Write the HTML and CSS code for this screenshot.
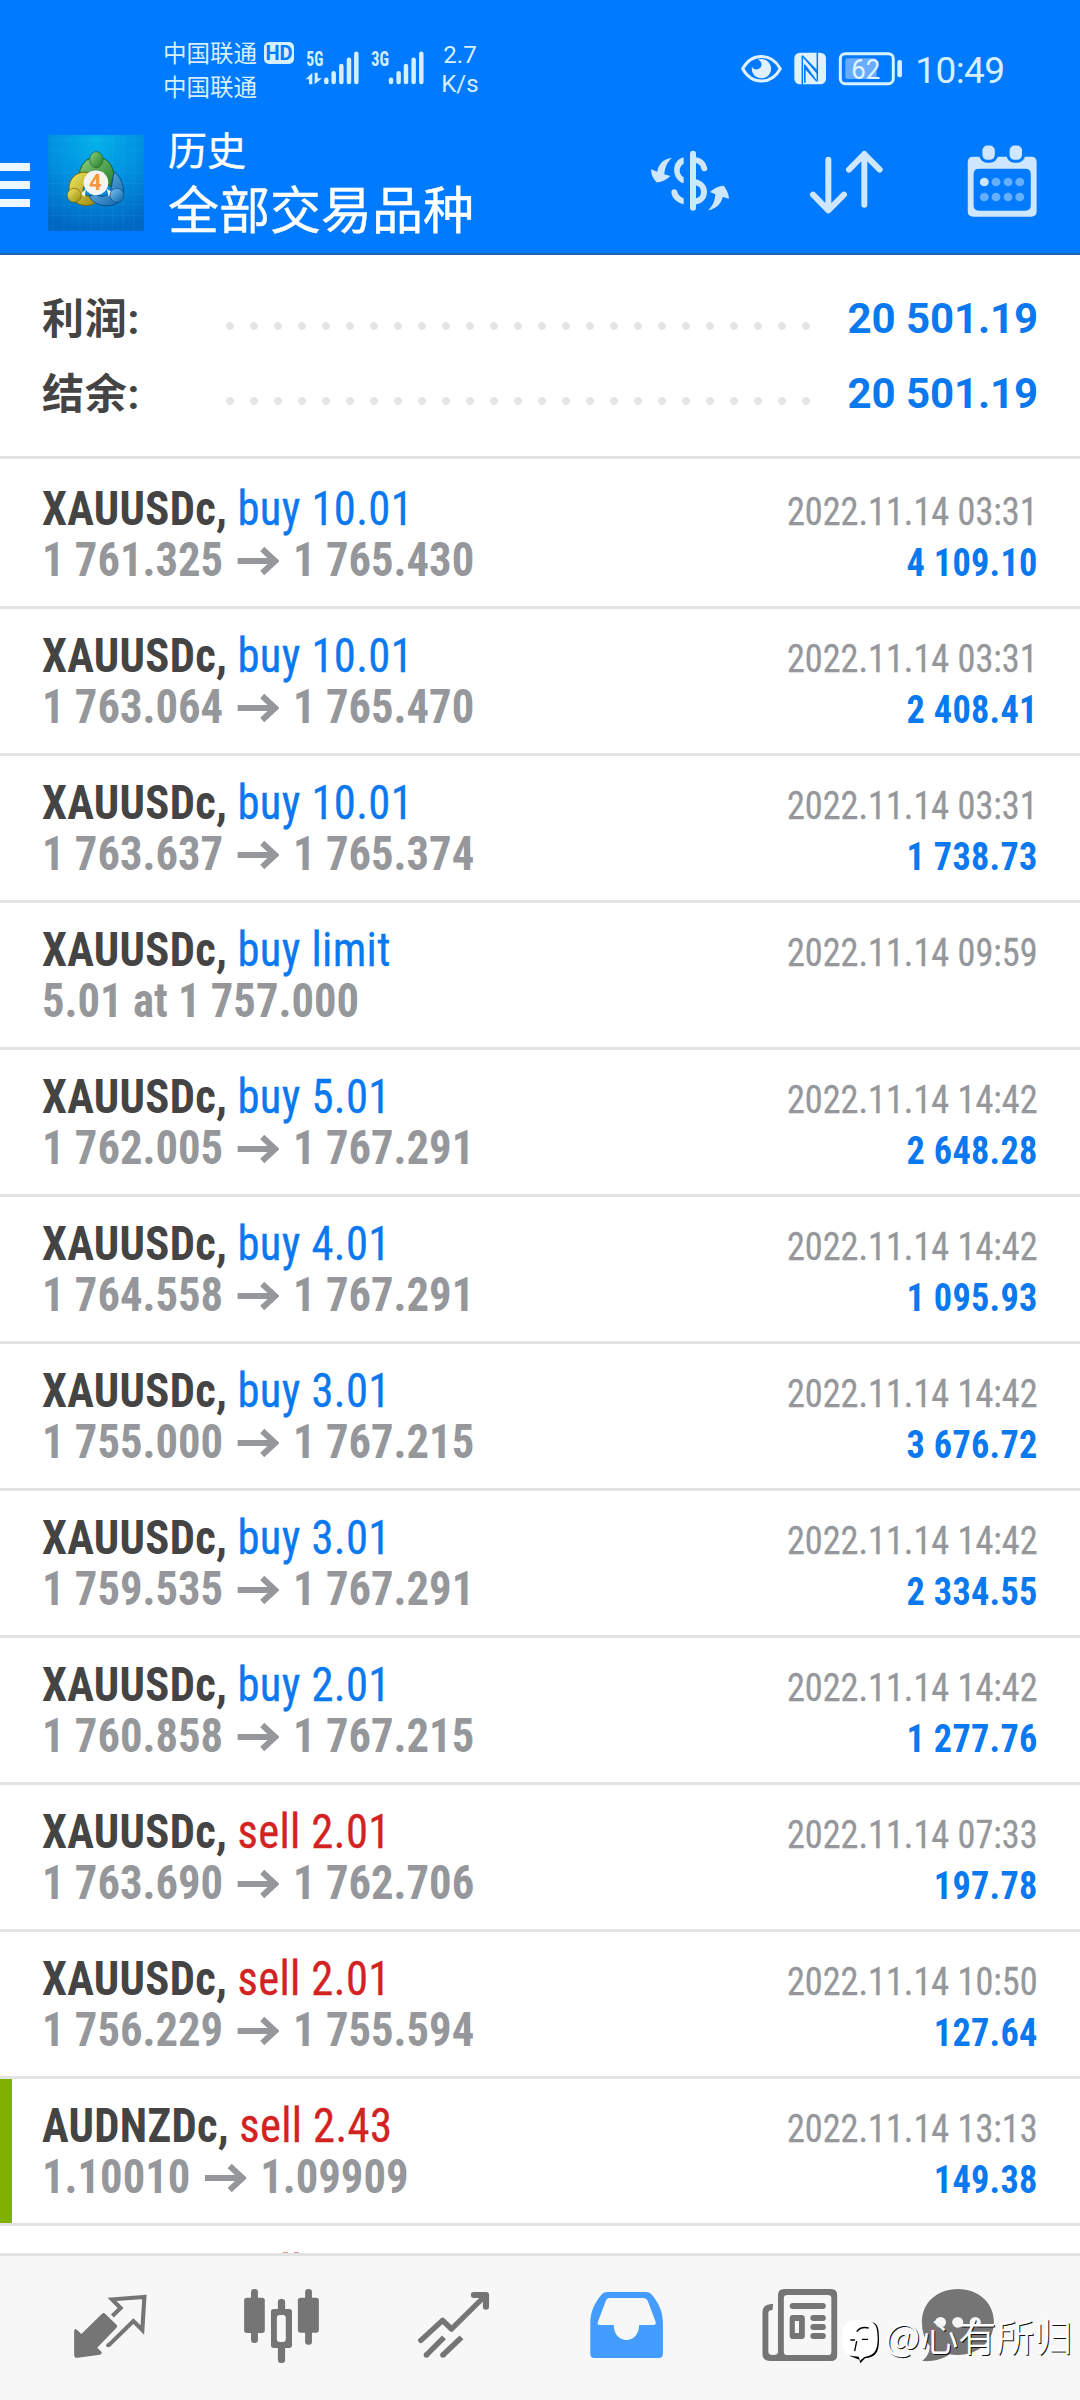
FILE: index.html
```html
<!DOCTYPE html>
<html lang="zh-CN">
<head>
<meta charset="utf-8">
<title>历史</title>
<link rel="stylesheet" href="styles.css">
</head>
<body>
<svg class="defs" width="0" height="0">
  <symbol id="arrow" viewBox="0 0 42 30" preserveAspectRatio="none"><path d="M0 15H38M25 3L38 15L25 27" fill="none" stroke="currentColor" stroke-width="6"/></symbol>
</svg>
<div class="screen">
  <header class="header">
    <div class="status">
      <div class="carriers"><div>中国联通</div><div>中国联通</div></div>
      <span class="hd">HD</span>
      <svg class="signal" viewBox="40 50 370 120" fill="#d6efff">
        <g class="net"><text x="50" y="108" textLength="51" lengthAdjust="spacingAndGlyphs">5G</text><text x="245" y="108" textLength="53" lengthAdjust="spacingAndGlyphs">3G</text></g>
        <path d="M68 127L48 147H58V162H68zM75 162V127H84V144H97z"/>
        <g stroke="#d6efff" stroke-width="13.5" stroke-linecap="round"><path d="M110 148V155M132 129V155M155 107V155M178 88V155M200 70V155M304 148V155M327 129V155M349 107V155M372 88V155M395 70V155"/></g>
      </svg>
      <div class="speed"><div>2.7</div><div>K/s</div></div>
      <svg class="indicators" viewBox="30 30 490 110">
        <path d="M38 86C65 37 124 37 151 86C124 135 65 135 38 86Z" fill="none" stroke="#dff1ff" stroke-width="9" stroke-linejoin="round"/>
        <path d="M84 59A29 29 0 1 1 66 80A15 15 0 1 0 84 59Z" fill="#dff1ff"/>
        <rect x="193" y="38" width="95" height="95" rx="17" fill="#dff1ff"/>
        <path d="M217 48V133M262 38V122" stroke="#007aff" stroke-width="4.500"/>
        <path d="M217 44L262 91V103L217 50ZM222 73L227 75L264 126L257 123L227 89V128H222Z" fill="#007aff"/>
        <rect x="331" y="41" width="159" height="90" rx="15" fill="none" stroke="#d6f3ff" stroke-width="9"/>
        <rect x="346" y="55" width="94" height="62" rx="7" fill="#69acff"/>
        <rect x="502" y="60" width="14" height="52" rx="6" fill="#d6f3ff"/>
        <text x="364" y="116" font-size="81" textLength="87" lengthAdjust="spacingAndGlyphs" fill="#e0f5ff">62</text>
      </svg>
      <span class="clock">10:49</span>
    </div>
    <div class="toolbar">
      <div class="menu"><i></i><i></i><i></i></div>
      <svg class="logo" viewBox="24 45 288 288">
        <defs>
          <radialGradient id="sky" cx=".5" cy=".05" r=".95"><stop offset="0" stop-color="#04b2e9"/><stop offset=".5" stop-color="#0090e0"/><stop offset="1" stop-color="#0068c2"/></radialGradient>
          <linearGradient id="gr" x1="0" y1="0" x2="1" y2="1"><stop offset="0" stop-color="#8fd07b"/><stop offset="1" stop-color="#1f7c2b"/></linearGradient>
          <linearGradient id="ye" x1="0" y1="0" x2="1" y2="1"><stop offset="0" stop-color="#f3ea62"/><stop offset="1" stop-color="#98870c"/></linearGradient>
          <linearGradient id="bl" x1="0" y1="0" x2="1" y2="1"><stop offset="0" stop-color="#7cc8f3"/><stop offset="1" stop-color="#0a5ea8"/></linearGradient>
        </defs>
        <rect x="24" y="45" width="288" height="288" fill="url(#sky)"/>
        <path d="M39 45V333M72 45V333M120 45V333M153 45V333M186 45V333M218 45V333M250 45V333M282 45V333M24 60H312M24 93H312M24 126H312M24 158H312M24 190H312M24 222H312M24 254H312M24 286H312" stroke="#5cc6f5" stroke-opacity=".18" stroke-width="2"/>
        <path d="M118 176C112 92 222 88 222 172L210 200L196 180C192 142 148 142 146 172Z" fill="url(#gr)" stroke="#17602b" stroke-width="3"/>
        <path d="M150 159C104 146 78 188 90 222C98 254 140 266 168 248L158 226C132 238 116 206 142 188Z" fill="url(#ye)" stroke="#71630e" stroke-width="3"/>
        <path d="M222 156C250 174 262 226 238 246C208 268 158 256 148 228L168 222C184 236 212 228 214 202Z" fill="url(#bl)" stroke="#0d4f8c" stroke-width="3"/>
        <path d="M138 206L122 222L134 230M200 206L216 216L206 230" fill="#f2f2e8"/>
        <ellipse cx="169" cy="119" rx="20" ry="24" fill="url(#gr)" stroke="#17602b" stroke-width="2"/>
        <circle cx="103" cy="226" r="21" fill="url(#ye)" stroke="#71630e" stroke-width="2"/>
        <circle cx="231" cy="226" r="21" fill="url(#bl)" stroke="#0d4f8c" stroke-width="2"/>
        <circle cx="168" cy="188" r="37" fill="#f5f4f2"/>
        <text x="147" y="211" font-size="64" font-weight="700" textLength="38" lengthAdjust="spacingAndGlyphs" fill="#f5963f">4</text>
      </svg>
      <div class="titles"><div class="title">历史</div><div class="subtitle">全部交易品种</div></div>
      <svg class="act currency" viewBox="30 55 240 195" fill="#cfe6ff">
        <rect x="150" y="63" width="18" height="180" rx="9"/>
        <path d="M96 84C68 88 55 104 52 126L33 119C34 140 42 150 50 158C66 158 80 150 91 139L73 134C74 115 82 96 96 84ZM204 242C218 230 224 216 226 194L210 187C222 175 236 168 251 168C259 178 266 190 267 207L248 202C244 222 228 238 204 242Z"/>
        <path d="M131 83C93 91 93 150 131 161V143C115 133 115 111 131 102Z"/>
        <path d="M94 188C94 176 108 177 111 184C114 196 122 203 131 206V224C110 219 96 206 94 188Z"/>
        <path d="M162 91C178 91 190 101 193 116M162 158C202 160 202 214 162 215" fill="none" stroke="#cfe6ff" stroke-width="18" stroke-linecap="round"/>
      </svg>
      <svg class="act sort" viewBox="500 55 240 205" fill="none" stroke="#cfe6ff" stroke-width="18" stroke-linecap="round" stroke-linejoin="round">
        <path d="M564 90V240M518 195L564 242L611 195M672 225V73M626 120L672 73L718 120"/>
      </svg>
      <svg class="act calendar" viewBox="1235 430 216 230" preserveAspectRatio="none">
        <path fill="#cfe6ff" fill-rule="evenodd" d="M1259 471H1427Q1443 471 1443 487V635Q1443 651 1427 651H1259Q1243 651 1243 635V487Q1243 471 1259 471ZM1276 507Q1260 507 1260 523V617Q1260 633 1276 633H1410Q1426 633 1426 617V523Q1426 507 1410 507Z"/>
        <g fill="#cfe6ff" stroke="#007aff" stroke-width="9"><rect x="1281" y="433" width="45" height="52" rx="19"/><rect x="1360" y="433" width="45" height="52" rx="19"/></g>
        <g fill="#66afff"><circle cx="1325" cy="547" r="13"/><circle cx="1360" cy="547" r="13"/><circle cx="1394" cy="547" r="13"/><circle cx="1291" cy="592" r="13"/><circle cx="1325" cy="592" r="13"/><circle cx="1360" cy="592" r="13"/><circle cx="1394" cy="592" r="13"/></g>
        <circle cx="1291" cy="547" r="13" fill="#cfe6ff"/>
      </svg>
    </div>
  </header>

  <section class="summary">
    <div class="sum"><span class="label">利润:</span><i class="dots"></i><span class="total">20 501.19</span></div>
    <div class="sum"><span class="label">结余:</span><i class="dots"></i><span class="total">20 501.19</span></div>
  </section>

  <main class="list">
    <div class="row"><div class="deal"><div><b>XAUUSDc,</b> <span class="buy">buy 10.01</span></div><div class="price">1 761.325 <svg class="to"><use href="#arrow"/></svg> 1 765.430</div></div><div class="result"><div class="date">2022.11.14 03:31</div><div class="profit">4 109.10</div></div></div>
    <div class="row"><div class="deal"><div><b>XAUUSDc,</b> <span class="buy">buy 10.01</span></div><div class="price">1 763.064 <svg class="to"><use href="#arrow"/></svg> 1 765.470</div></div><div class="result"><div class="date">2022.11.14 03:31</div><div class="profit">2 408.41</div></div></div>
    <div class="row"><div class="deal"><div><b>XAUUSDc,</b> <span class="buy">buy 10.01</span></div><div class="price">1 763.637 <svg class="to"><use href="#arrow"/></svg> 1 765.374</div></div><div class="result"><div class="date">2022.11.14 03:31</div><div class="profit">1 738.73</div></div></div>
    <div class="row"><div class="deal"><div><b>XAUUSDc,</b> <span class="buy">buy limit</span></div><div class="price">5.01 at 1 757.000</div></div><div class="result"><div class="date">2022.11.14 09:59</div></div></div>
    <div class="row"><div class="deal"><div><b>XAUUSDc,</b> <span class="buy">buy 5.01</span></div><div class="price">1 762.005 <svg class="to"><use href="#arrow"/></svg> 1 767.291</div></div><div class="result"><div class="date">2022.11.14 14:42</div><div class="profit">2 648.28</div></div></div>
    <div class="row"><div class="deal"><div><b>XAUUSDc,</b> <span class="buy">buy 4.01</span></div><div class="price">1 764.558 <svg class="to"><use href="#arrow"/></svg> 1 767.291</div></div><div class="result"><div class="date">2022.11.14 14:42</div><div class="profit">1 095.93</div></div></div>
    <div class="row"><div class="deal"><div><b>XAUUSDc,</b> <span class="buy">buy 3.01</span></div><div class="price">1 755.000 <svg class="to"><use href="#arrow"/></svg> 1 767.215</div></div><div class="result"><div class="date">2022.11.14 14:42</div><div class="profit">3 676.72</div></div></div>
    <div class="row"><div class="deal"><div><b>XAUUSDc,</b> <span class="buy">buy 3.01</span></div><div class="price">1 759.535 <svg class="to"><use href="#arrow"/></svg> 1 767.291</div></div><div class="result"><div class="date">2022.11.14 14:42</div><div class="profit">2 334.55</div></div></div>
    <div class="row"><div class="deal"><div><b>XAUUSDc,</b> <span class="buy">buy 2.01</span></div><div class="price">1 760.858 <svg class="to"><use href="#arrow"/></svg> 1 767.215</div></div><div class="result"><div class="date">2022.11.14 14:42</div><div class="profit">1 277.76</div></div></div>
    <div class="row"><div class="deal"><div><b>XAUUSDc,</b> <span class="sell">sell 2.01</span></div><div class="price">1 763.690 <svg class="to"><use href="#arrow"/></svg> 1 762.706</div></div><div class="result"><div class="date">2022.11.14 07:33</div><div class="profit">197.78</div></div></div>
    <div class="row"><div class="deal"><div><b>XAUUSDc,</b> <span class="sell">sell 2.01</span></div><div class="price">1 756.229 <svg class="to"><use href="#arrow"/></svg> 1 755.594</div></div><div class="result"><div class="date">2022.11.14 10:50</div><div class="profit">127.64</div></div></div>
    <div class="row marked"><div class="deal"><div><b>AUDNZDc,</b> <span class="sell">sell 2.43</span></div><div class="price">1.10010 <svg class="to"><use href="#arrow"/></svg> 1.09909</div></div><div class="result"><div class="date">2022.11.14 13:13</div><div class="profit">149.38</div></div></div>
    <div class="next"><i></i><i></i></div>
  </main>

  <nav class="nav">
    <svg viewBox="203 738 232.3 240" preserveAspectRatio="none">
      <path d="M296 821Q301 817 305 821L338 854Q342 859 338 863L282 923L295 936Q296 942 290 944L226 953Q215 955 215 944V872Q217 864 223 869L236 882Z" fill="#757575"/>
      <path d="M326 828L350 804L325 778L419 771L413 870L387 843L315 916" fill="none" stroke="#757575" stroke-width="12"/><circle cx="314" cy="916" r="6" fill="#757575"/>
    </svg>
    <svg viewBox="702.8 738 232.3 240" preserveAspectRatio="none" fill="#757575">
      <rect x="729" y="747" width="20" height="162" rx="9"/><rect x="709" y="773" width="60" height="106" rx="8"/>
      <rect x="886" y="747" width="20" height="167" rx="9"/><rect x="865" y="773" width="61" height="105" rx="8"/>
      <rect x="807" y="777" width="21" height="192" rx="9"/><rect x="787" y="807" width="61" height="117" rx="8"/><rect x="804" y="825" width="26" height="81" rx="9" fill="#f7f7f7"/>
    </svg>
    <svg viewBox="1202 738 232.3 240" preserveAspectRatio="none" fill="none" stroke="#757575" stroke-width="16">
      <path d="M1222 901L1285 841L1311 867L1408 768" stroke-linejoin="round" stroke-linecap="round"/><path d="M1376 765H1411V800" stroke-width="18" stroke-linecap="round" stroke-linejoin="round"/>
      <path d="M1238 945L1289 892M1286 945L1340 892"/><path d="M1238 945h.1M1286 945h.1" stroke-linecap="round"/>
    </svg>
    <svg viewBox="133.6 738 232.300 240" preserveAspectRatio="none">
      <path d="M194 756H309Q319 756 325 764C345 790 357 815 357 850V942Q357 954 345 954H158Q146 954 146 942V850C146 815 158 790 178 764Q184 756 194 756Z" fill="#459cff"/>
      <path d="M202 774H299Q309 774 313 783L336 846Q338 855 329 855H288C287 915 215 915 214 855H174Q165 855 168 846L191 783Q194 774 202 774Z" fill="#f7f7f7"/>
    </svg>
    <svg viewBox="633 738 232.3 240" preserveAspectRatio="none">
      <path d="M677 792H672Q646 794 646 816V942Q646 963 668 963H845Q863 963 863 945V765Q863 747 845 747H709Q691 747 691 765V936Q691 945 677 945Q663 945 663 936V820Q663 810 675 810ZM718 765H836Q846 765 846 775V935Q846 945 836 945H718Q708 945 708 935V775Q708 765 718 765Z" fill="#757575" fill-rule="evenodd"/>
      <g fill="#757575"><rect x="725" y="789" width="105" height="18" rx="9"/><path fill-rule="evenodd" d="M735 825H759Q769 825 769 835V887Q769 897 759 897H735Q725 897 725 887V835Q725 825 735 825ZM740 843V879H752V843Z"/><rect x="785" y="825" width="45" height="18" rx="9"/><rect x="785" y="852" width="45" height="18" rx="9"/><rect x="785" y="879" width="45" height="18" rx="9"/></g>
    </svg>
    <svg class="chat" viewBox="1097.7 738 232.3 240" preserveAspectRatio="none">
      <path d="M1213 747C1275 747 1318 790 1318 846C1318 902 1275 945 1213 945Q1200 945 1190 943C1165 960 1140 965 1110 963C1125 950 1131 937 1132 919Q1109 890 1109 846C1109 790 1152 747 1213 747Z" fill="#757575"/>
      <g fill="#f7f7f7"><circle cx="1163" cy="847" r="16"/><circle cx="1213" cy="847" r="16"/><circle cx="1264" cy="847" r="16"/></g>
    </svg>
  </nav>

  <div class="credit">
    <svg viewBox="30 115 125 140">
      <path d="M128 128C143 133 147 145 147 180C147 220 136 232 105 236L91 251L88 240L60 229Z" fill="#000"/>
      <path d="M88 122C132 122 143 132 143 176C143 216 132 227 103 232L90 243L86 231C48 230 37 218 37 176C37 132 48 122 88 122Z" fill="#fff"/>
      <path d="M80 156Q92 139 116 145M61 181H75M96 179H114M74 214L80 184" fill="none" stroke="#000" stroke-width="4"/>
    </svg>
    <span>@心有所归</span>
  </div>
</div>
</body>
</html>
```
FILE: styles.css
```css
* { box-sizing: border-box; }
body { margin: 0; background: #fff; }
.defs { display: block; position: absolute; }
.screen {
  position: relative;
  width: 1080px;
  height: 2400px;
  overflow: hidden;
  display: flex;
  flex-direction: column;
  font-family: Roboto, "Noto Sans CJK SC", sans-serif;
}

/* header */
.header { height: 255px; flex: none; background: #007aff; border-bottom: 2px solid #1b68b8; color: #fff; }
.status { height: 119px; display: flex; align-items: flex-start; color: #d6efff; }
.carriers { margin: 34.500px 0 0 163px; width: 94px; font: 23.5px/34px "Noto Sans CJK SC", sans-serif; white-space: nowrap; }
.hd { margin: 42px 0 0 7px; width: 30px; height: 22px; border-radius: 5px; background: #d6efff; color: #007aff; font-weight: 700; font-size: 20px; line-height: 22px; text-align: center; }
.signal { margin: 46.700px 0 0 9.300px; width: 123.300px; height: 40px; }
.net { font: 700 61px "Roboto Condensed", sans-serif; }
.speed { margin: 41px 0 0 12.400px; width: 42px; font-size: 24px; line-height: 28.500px; text-align: center; }
.indicators { margin: 50px 0 0 259px; width: 163.300px; height: 36.700px; }
.clock { margin: 50.500px 0 0 12px; font-size: 37px; line-height: 40px; letter-spacing: -.6px; }

.toolbar { height: 134px; display: flex; align-items: flex-start; }
.menu { width: 30px; margin-top: 44px; display: flex; flex-direction: column; gap: 10px; }
.menu i { height: 8px; background: #ebf8ff; }
.logo { width: 96px; height: 96px; margin: 16px 0 0 18px; }
.titles { margin-left: 24px; width: 310px; white-space: nowrap; font-family: "Noto Sans CJK SC", sans-serif; -webkit-text-stroke: .4px #fff; }
.title { font-size: 39px; line-height: 50px; margin-top: 4px; }
.subtitle { font-size: 51px; line-height: 68px; }
.act { flex: none; }
.currency { width: 80px; height: 65px; margin: 29.300px 0 0 172px; }
.sort { width: 80px; height: 68.300px; margin: 29.300px 0 0 76.700px; }
.calendar { width: 74.400px; height: 76.700px; margin: 24.300px 0 0 78.600px; }

/* totals */
.summary { height: 204px; flex: none; padding: 26px 42px 0; border-bottom: 3px solid #e3e3e3; }
.sum { height: 75px; display: flex; align-items: center; }
.label { width: 176px; margin-top: 2px; color: #444; font: 700 42px/75px Roboto, "Noto Sans CJK SC", sans-serif; letter-spacing: .8px; }
.dots { width: 600px; height: 8px; margin-top: 15px; background: radial-gradient(circle at 12px 4px, #e4e4e4 3.500px, transparent 4.200px) 0 0 / 24px 8px repeat-x; }
.total { margin-left: auto; color: #0a78ee; font-size: 42px; font-weight: 700; letter-spacing: -.1px; }

/* deals */
.list { height: 1794px; flex: none; overflow: hidden; background: #fff; }
.row { height: 147px; padding: 21px 42px 0; border-bottom: 3px solid #e3e3e3; display: flex; justify-content: space-between; font-family: "Roboto Condensed", Roboto, sans-serif; white-space: nowrap; }
.row:first-child { height: 150px; padding-top: 24px; }
.deal { font-size: 48px; line-height: 51px; color: #444; transform: scaleX(.93); transform-origin: left; }
.deal b { letter-spacing: .3px; }
.buy, .sell { letter-spacing: .4px; -webkit-text-stroke: .3px currentColor; }
.buy { color: #0a78ee; }
.sell { color: #d32222; }
.price { color: #95979b; font-weight: 700; }
.to { width: 45px; height: 30px; vertical-align: 0; margin: 0 4px; }
.result { padding-top: 4px; font-size: 39px; line-height: 51px; text-align: right; transform: scaleX(.93); transform-origin: right; }
.date { color: #95979b; -webkit-text-stroke: .3px currentColor; }
.profit { color: #0a78ee; font-weight: 700; letter-spacing: .3px; }
.marked { background: linear-gradient(#7fb100, #7fb100) 0 0 / 12px 144px no-repeat; }
.next { padding: 26px 0 0 283px; display: flex; gap: 6px; }
.next i { width: 5px; height: 1px; background: #d99; }

/* bottom tabs */
.nav { height: 147px; flex: none; padding: 30px 0 0 70px; background: #f7f7f7; border-top: 3px solid #e3e3e3; display: flex; gap: 92px; }
.nav svg { width: 80px; height: 80px; flex: none; }
.nav .chat { margin-left: -12px; }

.credit { position: absolute; left: 840px; top: 2318px; display: flex; white-space: nowrap; color: #fff; }
.credit svg { width: 41.700px; height: 46.700px; }
.credit span { margin: -3px 0 0 3px; font: 350 38px/40px "Noto Sans CJK SC", sans-serif; text-shadow: 1px 1px 0 #111; }
```
